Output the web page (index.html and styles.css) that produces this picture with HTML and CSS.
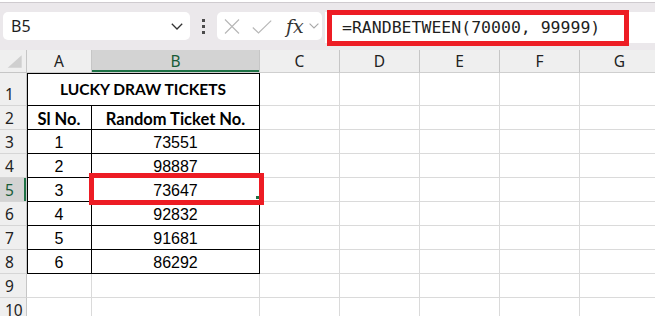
FILE: index.html
```html
<!DOCTYPE html>
<html lang="en">
<head>
  <meta charset="UTF-8">
  <title>Lucky Draw Tickets</title>
  <link rel="stylesheet" href="styles.css">
</head>
<body>
  <div class="edge"></div>
  <div class="bar">
    <div class="namebox">
      <span>B5</span>
      <svg width="12" height="7" viewBox="0 0 12 7"><path d="M0.8 0.8 L6 6 L11.2 0.8" fill="none" stroke="#333" stroke-width="1.3"/></svg>
    </div>
    <div class="dots"><i></i><i></i><i></i></div>
    <div class="fxbox">
      <svg class="ic-x" width="16" height="15" viewBox="0 0 16 15"><path d="M1 0.5 L15 14.5 M15 0.5 L1 14.5" stroke="#b8b8b8" stroke-width="1.2" fill="none"/></svg>
      <svg class="ic-ok" width="20" height="14" viewBox="0 0 20 14"><path d="M0.8 7.5 L6.5 13 L19.2 0.6" stroke="#b8b8b8" stroke-width="1.2" fill="none"/></svg>
      <span class="fx">fx</span>
      <svg class="ic-dd" width="10" height="6" viewBox="0 0 10 6"><path d="M0.6 0.6 L5 5 L9.4 0.6" stroke="#a8a8a8" stroke-width="1.1" fill="none"/></svg>
    </div>
    <div class="formula">
      <span>=RANDBETWEEN(70000, 99999)</span>
      <div class="mark"></div>
    </div>
  </div>

  <div class="sheet">
    <div class="corner"><svg width="27" height="22" viewBox="0 0 27 22"><path d="M22.5 5 L22.5 18 L8 18 Z" fill="#cfcfcf"/></svg></div>
    <div class="hd">A</div>
    <div class="hd sel-col">B</div>
    <div class="hd">C</div>
    <div class="hd">D</div>
    <div class="hd">E</div>
    <div class="hd">F</div>
    <div class="hd">G</div>

    <div class="rh">1</div>
    <div class="tb title top left">LUCKY DRAW TICKETS</div>
    <div class="c"></div><div class="c"></div><div class="c"></div><div class="c"></div><div class="c"></div>

    <div class="rh">2</div>
    <div class="tb bold left">Sl No.</div>
    <div class="tb bold">Random Ticket No.</div>
    <div class="c"></div><div class="c"></div><div class="c"></div><div class="c"></div><div class="c"></div>

    <div class="rh">3</div>
    <div class="tb left">1</div>
    <div class="tb">73551</div>
    <div class="c"></div><div class="c"></div><div class="c"></div><div class="c"></div><div class="c"></div>

    <div class="rh">4</div>
    <div class="tb left">2</div>
    <div class="tb">98887</div>
    <div class="c"></div><div class="c"></div><div class="c"></div><div class="c"></div><div class="c"></div>

    <div class="rh sel-row">5</div>
    <div class="tb left">3</div>
    <div class="tb active">73647<div class="mark-cell"></div><div class="handle"></div></div>
    <div class="c"></div><div class="c"></div><div class="c"></div><div class="c"></div><div class="c"></div>

    <div class="rh">6</div>
    <div class="tb left">4</div>
    <div class="tb">92832</div>
    <div class="c"></div><div class="c"></div><div class="c"></div><div class="c"></div><div class="c"></div>

    <div class="rh">7</div>
    <div class="tb left">5</div>
    <div class="tb">91681</div>
    <div class="c"></div><div class="c"></div><div class="c"></div><div class="c"></div><div class="c"></div>

    <div class="rh">8</div>
    <div class="tb left">6</div>
    <div class="tb">86292</div>
    <div class="c"></div><div class="c"></div><div class="c"></div><div class="c"></div><div class="c"></div>

    <div class="rh">9</div>
    <div class="c"></div><div class="c"></div><div class="c"></div><div class="c"></div><div class="c"></div><div class="c"></div><div class="c"></div>

    <div class="rh">10</div>
    <div class="c"></div><div class="c"></div><div class="c"></div><div class="c"></div><div class="c"></div><div class="c"></div><div class="c"></div>
  </div>
</body>
</html>
```

FILE: styles.css
```css
html, body {
  overflow: hidden;
}

body {
  margin: 0;
  background: #fff;
  font-family: "Noto Sans", sans-serif;
  color: #222;
}

.edge {
  height: 2px;
  background: #fff;
  border-bottom: 1px solid #cfcbcf;
}

.bar {
  height: 47px;
  box-sizing: border-box;
  padding-top: 9px;
  background: #ebe8eb;
  display: flex;
  align-items: flex-start;
}

.namebox {
  margin-left: 3px;
  width: 187px;
  height: 28px;
  box-sizing: border-box;
  padding: 0 7px 0 8px;
  background: #fff;
  border-radius: 5px;
  display: flex;
  align-items: center;
  justify-content: space-between;
  font-size: 16px;
  color: #1f1f1f;
}

.dots {
  width: 27px;
  height: 28px;
  display: flex;
  flex-direction: column;
  align-items: center;
  justify-content: center;
  gap: 3px;
}

.dots i {
  width: 3px;
  height: 3px;
  background: #4a4a4a;
}

.fxbox {
  width: 105px;
  height: 28px;
  background: #fff;
  border-radius: 5px;
  display: flex;
  align-items: center;
}

.ic-x {
  margin-left: 7px;
}

.ic-ok {
  margin-left: 12px;
  margin-top: 2px;
}

.fx {
  margin-left: 14px;
  font-family: "DejaVu Serif", serif;
  font-style: italic;
  font-size: 19px;
  line-height: 20px;
  color: #333;
}

.ic-dd {
  margin-left: 5px;
}

.formula {
  margin-left: 3px;
  flex: 1;
  height: 31px;
  padding-left: 17px;
  background: #fff;
  position: relative;
  font-family: "DejaVu Sans Mono", monospace;
  font-size: 16.5px;
  line-height: 31px;
  color: #1f1f1f;
  white-space: nowrap;
}

.mark {
  position: absolute;
  left: 2px;
  top: -2px;
  width: 302px;
  height: 36px;
  box-sizing: border-box;
  border: 5px solid #ed1c24;
}

.sheet {
  display: grid;
  grid-template-columns: 27px 65px 168px repeat(5, 80px);
  grid-template-rows: 23px 33px repeat(10, 24px);
  font-size: 16px;
}

.sheet > div {
  box-sizing: border-box;
  display: flex;
}

.corner {
  background: #efefef;
  border-right: 1px solid #c6c6c6;
  border-bottom: 1px solid #c6c6c6;
}

.hd {
  background: #efefef;
  border-right: 1px solid #c6c6c6;
  border-bottom: 1px solid #cfcfcf;
  align-items: center;
  justify-content: center;
  font-size: 15.5px;
  line-height: 18px;
  color: #222;
}

.hd.sel-col {
  background: #d3d3d3;
  color: #185c37;
  box-shadow: inset 0 -2px 0 #1e7145;
}

.rh {
  background: #efefef;
  border-right: 1px solid #c6c6c6;
  border-bottom: 1px solid #d6d6d6;
  align-items: flex-end;
  padding: 0 0 2px 5px;
  font-size: 15.5px;
  line-height: 18px;
  color: #222;
}

.rh.sel-row {
  background: #d3d3d3;
  color: #185c37;
  box-shadow: inset -2px 0 0 #1e7145;
}

.c {
  border-right: 1px solid #dadada;
  border-bottom: 1px solid #dadada;
}

.tb {
  border-right: 1px solid #000;
  border-bottom: 1px solid #000;
  align-items: flex-end;
  justify-content: center;
  padding-bottom: 1px;
  font-family: "Liberation Sans", Arial, sans-serif;
  font-size: 16px;
  line-height: 18px;
  color: #000;
}

.tb.left {
  box-shadow: inset 1px 0 0 #000;
}

.tb.title {
  grid-column: span 2;
  align-items: center;
  padding-bottom: 0;
  font-family: Lato, "Liberation Sans", sans-serif;
  font-weight: bold;
  font-size: 15.5px;
  box-shadow: inset 1px 1px 0 #000;
}

.tb.bold {
  font-family: Lato, "Liberation Sans", sans-serif;
  font-weight: bold;
  font-size: 16.5px;
}

.tb.active {
  position: relative;
}

.mark-cell {
  position: absolute;
  left: -3px;
  top: -5px;
  width: 175px;
  height: 32px;
  box-sizing: border-box;
  border: 5px solid #ed1c24;
}

.handle {
  position: absolute;
  right: 0;
  bottom: 2px;
  width: 3px;
  height: 3px;
  background: #1e7145;
}
```
